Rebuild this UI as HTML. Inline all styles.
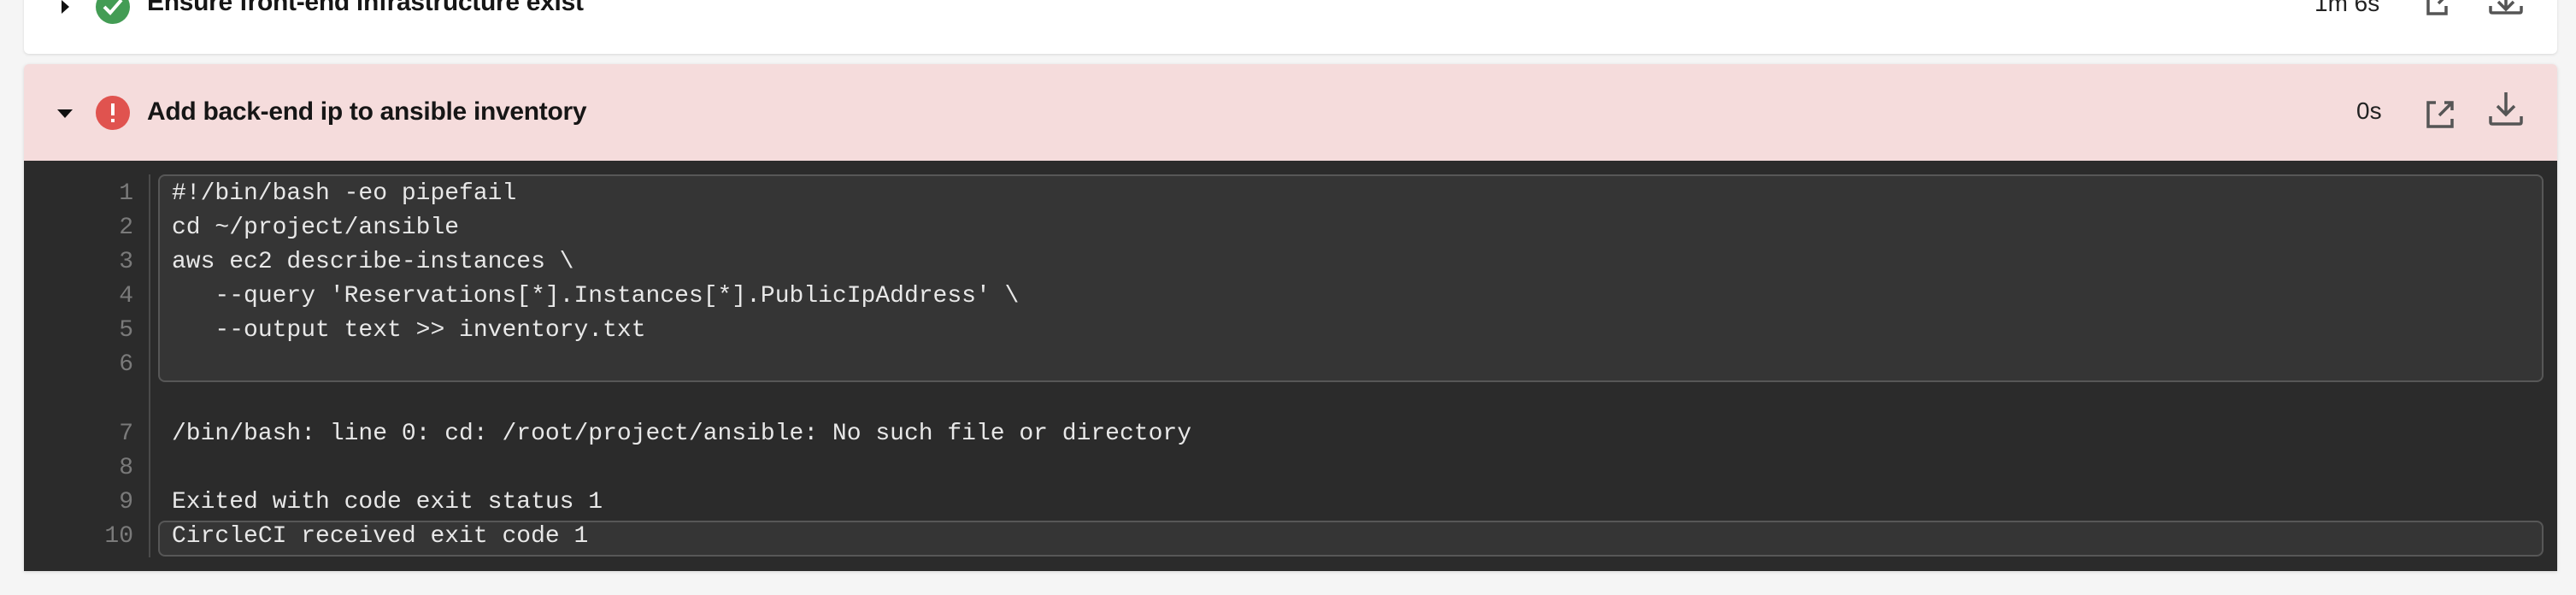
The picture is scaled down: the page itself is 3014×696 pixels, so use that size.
<!DOCTYPE html>
<html><head><style>
*{margin:0;padding:0;box-sizing:border-box}
body{width:3014px;height:696px;background:#f5f5f5;position:relative;overflow:hidden;font-family:"Liberation Sans",Arial,sans-serif}
.card1{position:absolute;left:28px;top:-20px;width:2964px;height:83px;background:#fff;border-radius:0 0 6px 6px;box-shadow:0 1px 3px rgba(0,0,0,.12)}
.card2{position:absolute;left:28px;top:75px;width:2964px;height:593px;border-radius:6px 6px 0 0;overflow:hidden;box-shadow:0 1px 4px rgba(0,0,0,.12)}
.hdr{position:absolute;left:0;top:0;width:100%;height:113px;background:#f5dcdc}
.dark{position:absolute;left:0;top:113px;width:100%;height:480px;background:#2b2b2b}
.title{position:absolute;font-weight:bold;font-size:30px;color:#161616;white-space:nowrap;letter-spacing:-0.3px}
.mono{font-family:"Liberation Mono",monospace;font-size:28px;color:#e8e8e8;white-space:pre;position:absolute;line-height:40px}
.ln{font-family:"Liberation Mono",monospace;font-size:28px;color:#7a7a7a;position:absolute;text-align:right;width:60px;line-height:40px}
.box{position:absolute;background:#353535;border:2px solid #575757;border-radius:8px}
.t{position:absolute;font-size:28px;color:#222}
</style></head><body>
<div class="card1"></div>
<svg style="position:absolute;left:72px;top:0" width="12" height="18"><path d="M0 0 L9 8 L0 16Z" fill="#111"/></svg>
<svg style="position:absolute;left:112px;top:-12px" width="40" height="40"><circle cx="20" cy="20" r="20" fill="#439c54"/><path d="M10 20 L17 27 L30 12" stroke="#fff" stroke-width="4" fill="none"/></svg>
<div class="title" style="left:172px;top:-14px">Ensure front-end infrastructure exist</div>
<div class="t" style="left:2708px;top:-12px">1m 6s</div>
<svg style="position:absolute;left:2838px;top:-8px" width="34" height="34"><path d="M12 3 H3 V24 H24 V15" stroke="#555" stroke-width="3.5" fill="none"/><path d="M15 12 L27 0 M20 0 H27 V7" stroke="#555" stroke-width="3.5" fill="none"/></svg>
<svg style="position:absolute;left:2912px;top:-10px" width="40" height="36"><path d="M20 0 V20 M11 12 L20 21 L29 12" stroke="#555" stroke-width="3.5" fill="none"/><path d="M2 17 V23 Q2 25 4 25 H36 Q38 25 38 23 V17" stroke="#555" stroke-width="3.5" fill="none"/></svg>

<div class="card2"><div class="hdr"></div><div class="dark"></div></div>
<svg style="position:absolute;left:67px;top:128px" width="18" height="10"><path d="M0 0 H18 L9 10Z" fill="#111"/></svg>
<svg style="position:absolute;left:112px;top:112px" width="40" height="40"><circle cx="20" cy="20" r="20" fill="#e0534f"/><rect x="18" y="9" width="4" height="14" fill="#fff"/><rect x="18" y="27" width="4" height="4" fill="#fff"/></svg>
<div class="title" style="left:172px;top:114px">Add back-end ip to ansible inventory</div>
<div class="t" style="left:2757px;top:114px">0s</div>
<svg style="position:absolute;left:2838px;top:117px" width="34" height="34"><path d="M12 3 H3 V31 H31 V22" stroke="#555" stroke-width="3.5" fill="none"/><path d="M16 18 L31 3 M22 3 H31 V12" stroke="#555" stroke-width="3.5" fill="none"/></svg>
<svg style="position:absolute;left:2912px;top:108px" width="40" height="40"><path d="M20 0 V26 M10 16 L20 26 L30 16" stroke="#555" stroke-width="3.5" fill="none"/><path d="M2 28 V35 Q2 37 4 37 H36 Q38 37 38 35 V28" stroke="#555" stroke-width="3.5" fill="none"/></svg>

<div style="position:absolute;left:174px;top:204px;width:2px;height:448px;background:#4a4a4a"></div>
<div class="box" style="left:185px;top:204px;width:2791px;height:243px"></div>
<div class="box" style="left:185px;top:609px;width:2791px;height:42px"></div>
<div class="ln" style="left:96px;top:207px">1<br>2<br>3<br>4<br>5<br>6</div>
<div class="ln" style="left:96px;top:488px">7<br>8<br>9<br>10</div>
<div class="mono" style="left:201px;top:207px">#!/bin/bash -eo pipefail
cd ~/project/ansible
aws ec2 describe-instances \
   --query 'Reservations[*].Instances[*].PublicIpAddress' \
   --output text &gt;&gt; inventory.txt
</div>
<div class="mono" style="left:201px;top:488px">/bin/bash: line 0: cd: /root/project/ansible: No such file or directory

Exited with code exit status 1
CircleCI received exit code 1</div>
</body></html>
